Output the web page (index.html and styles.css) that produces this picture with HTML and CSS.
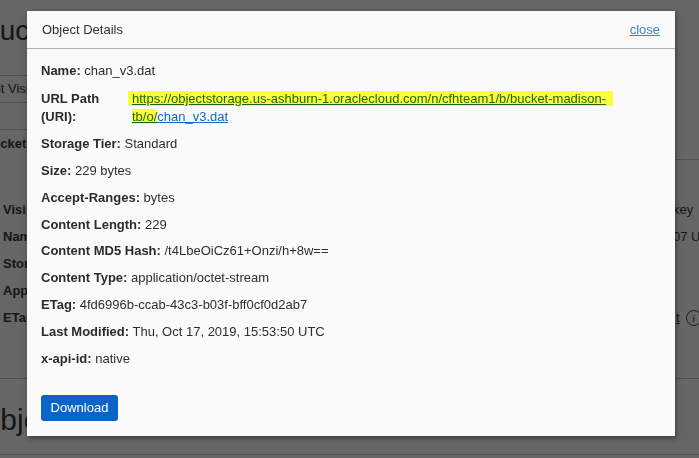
FILE: index.html
```html
<!DOCTYPE html>
<html lang="en">
<head>
<meta charset="utf-8">
<title>Object Details</title>
<link rel="stylesheet" href="styles.css">
</head>
<body>
<div class="page">
  <div class="bg-title">Bucket Details</div>
  <div class="bg-btn">Edit Visibility</div>
  <div class="bg-rule bg-rule-a"></div>
  <div class="bg-heading">Bucket Information</div>
  <div class="bg-rule bg-rule-b"></div>
  <div class="bg-info">
    <div class="bg-label">Visibility:</div><div class="bg-value">key</div>
    <div class="bg-label">Namespace:</div><div class="bg-value">07 UTC</div>
    <div class="bg-label">Storage Tier:</div><div class="bg-value"></div>
    <div class="bg-label">Approximate Count:</div><div class="bg-value"></div>
    <div class="bg-label">ETag:</div><div class="bg-value"><span class="bg-link">t</span><span class="bg-info-icon">i</span></div>
  </div>
  <div class="bg-rule bg-rule-c"></div>
  <div class="bg-section">Objects</div>
  <div class="bg-rule bg-rule-d"></div>
</div>

<div class="modal">
  <div class="modal-header">
    <span class="modal-title">Object Details</span>
    <a class="close-link" href="#">close</a>
  </div>
  <div class="modal-body">
    <div class="row row-first"><b>Name:</b> chan_v3.dat</div>
    <div class="row row-url">
      <b class="url-label">URL Path (URI):</b>
      <a class="url" href="#"><span class="hl hl-first">https://objectstorage.us-ashburn-1.oraclecloud.com/n/cfhteam1/b/bucket-madison-</span><span class="hl">tb/o/</span><span class="url-tail">chan_v3.dat</span></a>
    </div>
    <div class="row"><b>Storage Tier:</b> Standard</div>
    <div class="row"><b>Size:</b> 229 bytes</div>
    <div class="row"><b>Accept-Ranges:</b> bytes</div>
    <div class="row"><b>Content Length:</b> 229</div>
    <div class="row"><b>Content MD5 Hash:</b> /t4LbeOiCz61+Onzi/h+8w==</div>
    <div class="row"><b>Content Type:</b> application/octet-stream</div>
    <div class="row"><b>ETag:</b> 4fd6996b-ccab-43c3-b03f-bff0cf0d2ab7</div>
    <div class="row"><b>Last Modified:</b> Thu, Oct 17, 2019, 15:53:50 UTC</div>
    <div class="row"><b>x-api-id:</b> native</div>
    <button class="btn-download" type="button">Download</button>
  </div>
</div>
</body>
</html>
```

FILE: styles.css
```css
html, body {
  margin: 0;
  padding: 0;
}
body {
  background: #666666;
  font-family: "Liberation Sans", Arial, Helvetica, sans-serif;
  font-size: 13px;
  color: #151515;
  width: 699px;
  height: 458px;
  overflow: hidden;
}

/* ---------- dimmed page behind the dialog ---------- */
.page {
  display: flex;
  flex-direction: column;
  align-items: flex-start;
}
.bg-title {
  margin-top: 14px;
  margin-left: -19px;
  font-size: 28px;
  line-height: 34px;
  white-space: nowrap;
}
.bg-btn {
  margin-top: 27px;
  margin-left: -29px;
  box-sizing: border-box;
  height: 28px;
  line-height: 26px;
  padding: 0 10px;
  border: 1px solid #4e4e4e;
  border-radius: 3px;
  white-space: nowrap;
}
.bg-rule {
  height: 1px;
  background: #505050;
}
.bg-rule-a {
  margin-top: 26px;
  width: 300px;
}
.bg-heading {
  margin-top: 5px;
  margin-left: -17px;
  line-height: 18px;
  font-weight: bold;
  white-space: nowrap;
}
.bg-rule-b {
  margin-top: 6px;
  margin-left: 600px;
  width: 99px;
}
.bg-info {
  margin-top: 41px;
  display: grid;
  grid-template-columns: 670px auto;
  row-gap: 9px;
  line-height: 18px;
  white-space: nowrap;
}
.bg-label {
  padding-left: 3px;
  font-weight: bold;
}
.bg-value {
  padding-left: 3px;
  display: flex;
  align-items: center;
  gap: 6px;
}
.bg-link {
  text-decoration: underline;
  padding-left: 3px;
}
.bg-info-icon {
  width: 14px;
  height: 14px;
  border: 1px solid #222;
  border-radius: 50%;
  font-family: "Liberation Serif", serif;
  font-style: italic;
  font-size: 11px;
  line-height: 14px;
  text-align: center;
}
.bg-rule-c {
  margin-top: 51px;
  width: 699px;
}
.bg-section {
  margin-top: 24px;
  margin-left: -23px;
  font-size: 30px;
  line-height: 34px;
}
.bg-rule-d {
  margin-top: 17px;
  width: 699px;
}

/* ---------- dialog ---------- */
.modal {
  position: fixed;
  left: 27px;
  top: 11px;
  width: 648px;
  background: #fafafb;
  box-shadow: 1px 2px 5px rgba(0, 0, 0, 0.45);
  color: #2e2e2e;
}
.modal-header {
  height: 37px;
  border-bottom: 1px solid #a9b1c2;
  display: flex;
  align-items: center;
  justify-content: space-between;
  padding: 0 15px 0 15px;
}
.modal-title {
  color: #303030;
}
.close-link {
  color: #3a84d6;
  text-decoration: underline;
}
.modal-body {
  padding: 13px 14px 15px 14px;
  display: flex;
  flex-direction: column;
  align-items: flex-start;
}
.row {
  line-height: 18px;
  margin-bottom: 8.85px;
}
.row-first {
  margin-bottom: 10px;
}
.row-url {
  margin-bottom: 9px;
}
.row b {
  font-weight: bold;
  color: #2b2b2b;
}
.row-url {
  display: grid;
  grid-template-columns: 91px 1fr;
  width: 620px;
}
.url-label {
  width: 70px;
}
.url {
  text-decoration: none;
}
.hl {
  background: #faff3b;
  color: #22640e;
  text-decoration: underline;
}
.hl-first {
  margin-left: -4px;
  padding: 0 7px 0 4px;
}
.url-tail {
  color: #1366c9;
  text-decoration: underline;
}
.btn-download {
  margin-top: 18px;
  height: 26px;
  width: 77px;
  padding: 0;
  border: none;
  border-radius: 3px;
  background: #0b64c9;
  color: #ffffff;
  font-family: "Liberation Sans", Arial, Helvetica, sans-serif;
  font-size: 13px;
}
```
